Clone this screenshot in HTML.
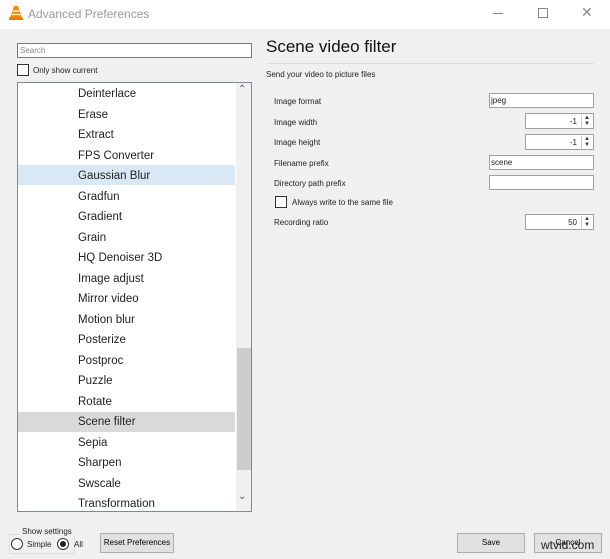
<!DOCTYPE html><html><head><style>
*{margin:0;padding:0;box-sizing:border-box}
body{width:610px;height:559px;background:#f0f0f0;font-family:"Liberation Sans",sans-serif;position:relative;overflow:hidden;color:#000}
.a{position:absolute}
.tb{left:0;top:0;width:610px;height:29px;background:#fff}
.s{font-size:8px;color:#222}
.box{background:#fff;border:1px solid #a0a0a0}
.item{position:absolute;left:60px;font-size:11.5px;color:#222}
.spin{position:absolute;right:1px;top:1px;width:11px;height:13px;border-left:1px solid #ccc;font-size:6px;line-height:6px;text-align:center;color:#333}
.btn{background:#e1e1e1;border:1px solid #adadad;font-size:8px;text-align:center}
</style></head><body>
<div class="a tb"></div>
<svg class="a" style="left:9px;top:5px" width="14" height="15" viewBox="0 0 14 15"><path d="M5 1h4l4 12H1z" fill="#f08a00"/><path d="M3.6 6h6.8M2.6 9.5h8.8" stroke="#fff" stroke-width="1.3"/><rect x="0" y="12.5" width="14" height="2.5" fill="#e57a00"/></svg>
<div class="a" style="left:28px;top:7px;font-size:12px;color:#999">Advanced Preferences</div>
<div class="a" style="left:493px;top:13px;width:10px;height:1px;background:#888"></div>
<div class="a" style="left:538px;top:8px;width:10px;height:10px;border:1px solid #888"></div>
<div class="a" style="left:581px;top:4px;font-size:14px;color:#888">✕</div>

<div class="a box" style="left:17px;top:43px;width:235px;height:15px;border-color:#7a7a7a"><span class="s" style="position:absolute;left:2px;top:2px;color:#888">Search</span></div>
<div class="a box" style="left:17px;top:64px;width:12px;height:12px;border-color:#333"></div>
<div class="a s" style="left:33px;top:66px">Only show current</div>

<div class="a box" style="left:17px;top:82px;width:235px;height:430px;border-color:#828790;overflow:hidden">
<div class="a" style="left:0;top:82px;width:217px;height:20px;background:#d9e8f5"></div>
<div class="a" style="left:0;top:329px;width:217px;height:20px;background:#d9d9d9"></div>
<div class="a" style="left:218px;top:0;width:16px;height:428px;background:#f0f0f0"></div>
<div class="a" style="left:219px;top:265px;width:14px;height:122px;background:#cdcdcd"></div>
<div class="a" style="left:220px;top:1px;font-size:10px;color:#555">&#8963;</div>
<div class="a" style="left:220px;top:408px;font-size:10px;color:#555">&#8964;</div>
<div class="item" style="top:5px">Deinterlace</div>
<div class="item" style="top:25.5px">Erase</div>
<div class="item" style="top:46px">Extract</div>
<div class="item" style="top:66.5px">FPS Converter</div>
<div class="item" style="top:87px">Gaussian Blur</div>
<div class="item" style="top:107.5px">Gradfun</div>
<div class="item" style="top:128px">Gradient</div>
<div class="item" style="top:148.5px">Grain</div>
<div class="item" style="top:169px">HQ Denoiser 3D</div>
<div class="item" style="top:189.5px">Image adjust</div>
<div class="item" style="top:210px">Mirror video</div>
<div class="item" style="top:230.5px">Motion blur</div>
<div class="item" style="top:251px">Posterize</div>
<div class="item" style="top:271.5px">Postproc</div>
<div class="item" style="top:292px">Puzzle</div>
<div class="item" style="top:312.5px">Rotate</div>
<div class="item" style="top:333px">Scene filter</div>
<div class="item" style="top:353.5px">Sepia</div>
<div class="item" style="top:374px">Sharpen</div>
<div class="item" style="top:394.5px">Swscale</div>
<div class="item" style="top:415px">Transformation</div>
</div>

<div class="a" style="left:266px;top:37px;font-size:17px;color:#111">Scene video filter</div>
<div class="a" style="left:266px;top:63px;width:328px;height:1px;background:#ddd"></div>
<div class="a s" style="left:266px;top:70px">Send your video to picture files</div>
<div class="a s" style="left:274px;top:97px">Image format</div>
<div class="a box" style="left:489px;top:93px;width:105px;height:15px"><span class="s" style="position:absolute;left:1px;top:2px">jpeg</span></div>
<div class="a s" style="left:274px;top:118px">Image width</div>
<div class="a box" style="left:525px;top:113px;width:69px;height:16px"><span class="s" style="position:absolute;right:16px;top:3px">-1</span><div class="spin">▲<br>▼</div></div>
<div class="a s" style="left:274px;top:138px">Image height</div>
<div class="a box" style="left:525px;top:134px;width:69px;height:16px"><span class="s" style="position:absolute;right:16px;top:3px">-1</span><div class="spin">▲<br>▼</div></div>
<div class="a s" style="left:274px;top:159px">Filename prefix</div>
<div class="a box" style="left:489px;top:155px;width:105px;height:15px"><span class="s" style="position:absolute;left:1px;top:2px">scene</span></div>
<div class="a s" style="left:274px;top:179px">Directory path prefix</div>
<div class="a box" style="left:489px;top:175px;width:105px;height:15px"></div>
<div class="a box" style="left:275px;top:196px;width:12px;height:12px;border-color:#333"></div>
<div class="a s" style="left:292px;top:198px">Always write to the same file</div>
<div class="a s" style="left:274px;top:218px">Recording ratio</div>
<div class="a box" style="left:525px;top:214px;width:69px;height:16px"><span class="s" style="position:absolute;right:16px;top:3px">50</span><div class="spin">▲<br>▼</div></div>

<div class="a" style="left:9px;top:534px;width:66px;height:20px;border:1px solid #dcdcdc"></div>
<div class="a s" style="left:20px;top:527px;background:#f0f0f0;padding:0 2px">Show settings</div>
<div class="a" style="left:11px;top:538px;width:12px;height:12px;border:1px solid #333;border-radius:50%;background:#fff"></div>
<div class="a s" style="left:27px;top:540px">Simple</div>
<div class="a" style="left:57px;top:538px;width:12px;height:12px;border:1px solid #333;border-radius:50%;background:#fff"><div style="margin:2px;width:6px;height:6px;border-radius:50%;background:#222"></div></div>
<div class="a s" style="left:74px;top:540px">All</div>
<div class="a btn" style="left:100px;top:533px;width:74px;height:20px;line-height:18px">Reset Preferences</div>
<div class="a btn" style="left:457px;top:533px;width:68px;height:20px;line-height:18px">Save</div>
<div class="a btn" style="left:534px;top:533px;width:68px;height:20px;line-height:18px">Cancel</div>
<div class="a" style="left:541px;top:538px;font-size:12px;color:#222">wtvid.com</div>
</body></html>
